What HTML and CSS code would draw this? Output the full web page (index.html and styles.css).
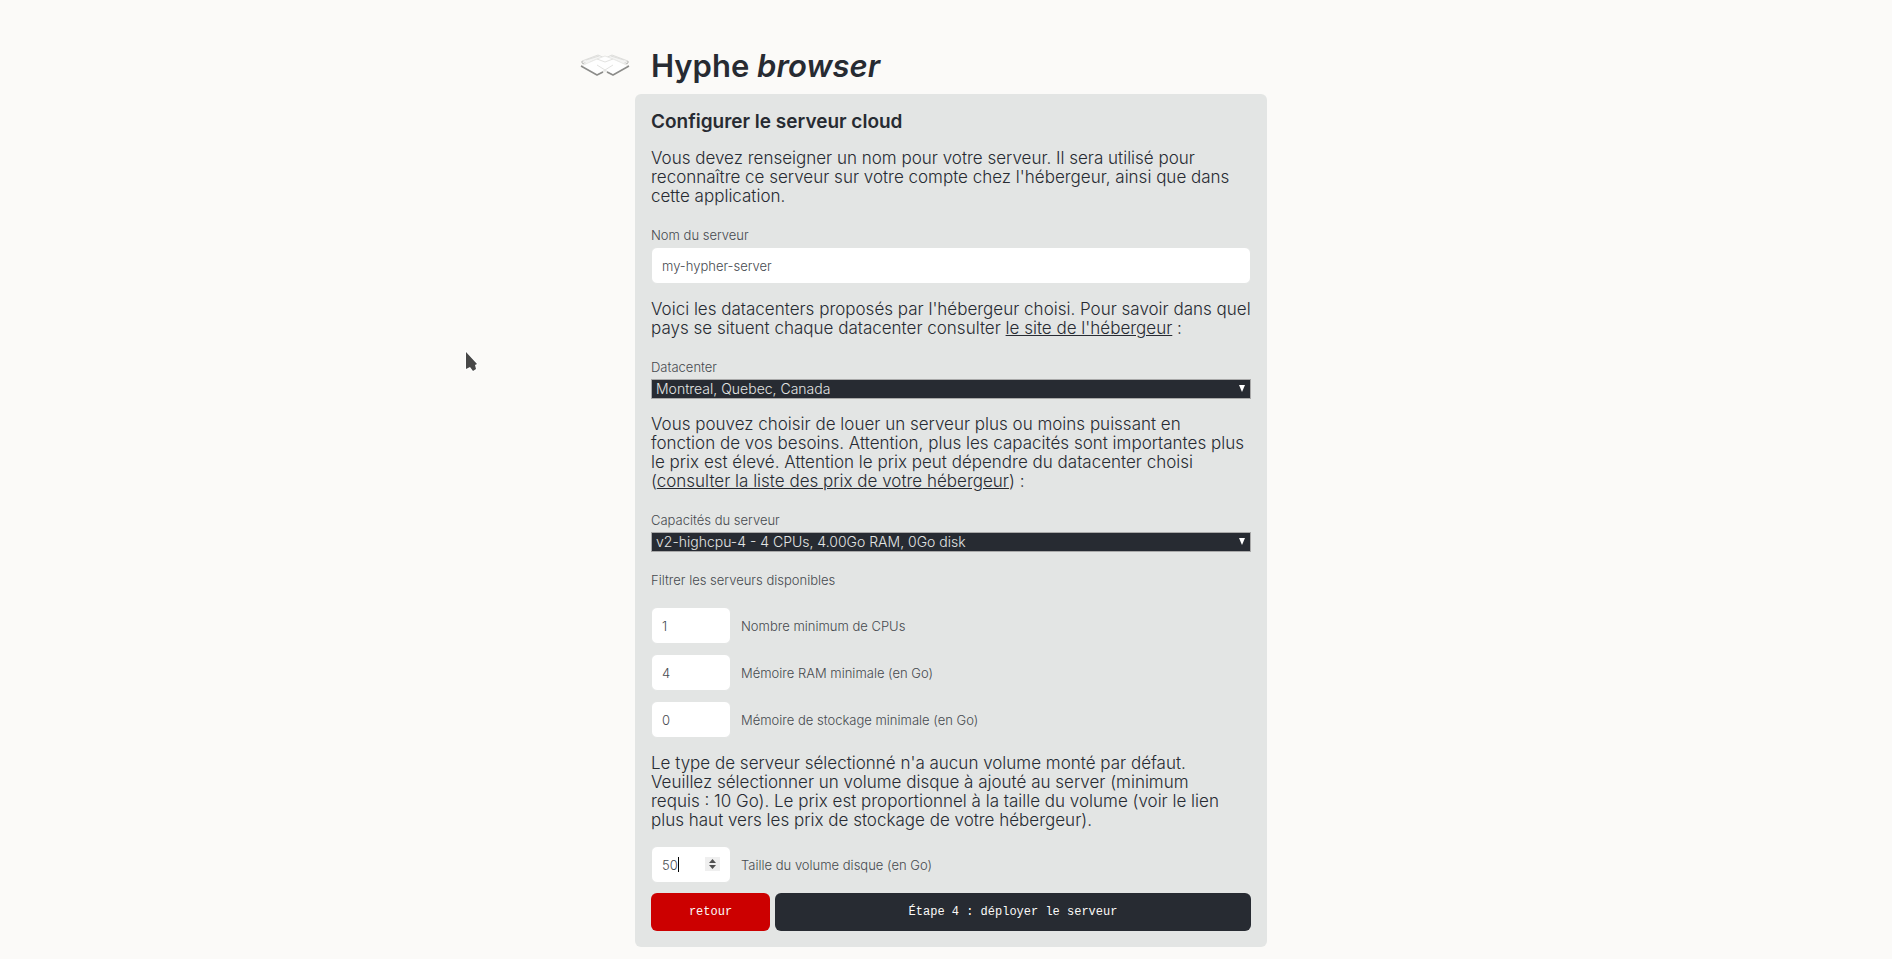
FILE: index.html
```html
<!DOCTYPE html>
<html lang="fr">
<head>
<meta charset="utf-8">
<meta name="viewport" content="width=device-width, initial-scale=1">
<title>Hyphe browser</title>
<link rel="stylesheet" href="styles.css">
</head>
<body>
<div class="page">
  <header class="header">
    <svg class="logo" viewBox="0 0 50 24" aria-hidden="true">
      <g stroke-linejoin="round">
        <path d="M2 7 18 1 25 4 32 1 48 7 34 15 25 10 16 15Z" fill="#f4f4f3" stroke="#dededc"/>
        <path d="M2 7v2L16 16M48 7v2L34 16" fill="none" stroke="#b4b4b2"/>
        <path d="M6 6 19 2M10 8 24 3M44 6 31 2M40 8 26 3" fill="none" stroke="#dededc"/>
        <path d="M1 12 17 5 25 2 33 5 49 12 33 21 25 17 17 21Z" fill="#fefefe" stroke="#e9e9e7"/>
        <path d="M17 5 25 8 33 5" fill="none" stroke="#e2e2e0"/>
        <path d="M17 21 33 11M33 21 17 11" fill="none" stroke="#e2e2e0"/>
        <path d="M1 12 17 21 23 18M49 12 33 21 27 18" fill="none" stroke="#8c8c8a" stroke-width="1.500"/>
      </g>
    </svg>
    <h1 class="title">Hyphe <em>browser</em></h1>
  </header>
  <form class="card">
    <h2 class="heading">Configurer le serveur cloud</h2>
    <p class="text">Vous devez renseigner un nom pour votre serveur. Il sera utilisé pour<br>reconnaître ce serveur sur votre compte chez l'hébergeur, ainsi que dans<br>cette application.</p>
    <div class="field">
      <label class="label" for="name">Nom du serveur</label>
      <input class="input" id="name" type="text" value="my-hypher-server">
    </div>
    <p class="text">Voici les datacenters proposés par l'hébergeur choisi. Pour savoir dans quel<br>pays se situent chaque datacenter consulter <a class="link" href="#">le site de l'hébergeur</a> :</p>
    <div class="field">
      <label class="label" for="datacenter">Datacenter</label>
      <span class="dropdown"><select class="select" id="datacenter"><option>Montreal, Quebec, Canada</option></select></span>
    </div>
    <p class="text">Vous pouvez choisir de louer un serveur plus ou moins puissant en<br>fonction de vos besoins. Attention, plus les capacités sont importantes plus<br>le prix est élevé. Attention le prix peut dépendre du datacenter choisi<br>(<a class="link" href="#">consulter la liste des prix de votre hébergeur</a>) :</p>
    <div class="field">
      <label class="label" for="capacity">Capacités du serveur</label>
      <span class="dropdown"><select class="select" id="capacity"><option>v2-highcpu-4 - 4 CPUs, 4.00Go RAM, 0Go disk</option></select></span>
    </div>
    <p class="label filter-title">Filtrer les serveurs disponibles</p>
    <div class="rows">
      <div class="row">
        <input class="input number" id="cpus" type="number" value="1">
        <label class="label" for="cpus">Nombre minimum de CPUs</label>
      </div>
      <div class="row">
        <input class="input number" id="ram" type="number" value="4">
        <label class="label" for="ram">Mémoire RAM minimale (en Go)</label>
      </div>
      <div class="row">
        <input class="input number" id="disk" type="number" value="0">
        <label class="label" for="disk">Mémoire de stockage minimale (en Go)</label>
      </div>
    </div>
    <p class="text">Le type de serveur sélectionné n'a aucun volume monté par défaut.<br>Veuillez sélectionner un volume disque à ajouté au server (minimum<br>requis : 10 Go). Le prix est proportionnel à la taille du volume (voir le lien<br>plus haut vers les prix de stockage de votre hébergeur).</p>
    <div class="row volume">
      <span class="stepper">
        <input class="input number" id="volume" type="number" value="50">
        <span class="caret"></span>
        <svg class="spinner" viewBox="0 0 15 14" aria-hidden="true"><path fill="#efefef" d="M0 0h15v14H0z"/><path fill="#505050" d="M4 6 7.500 2 11 6ZM4 8h7L7.500 12Z"/></svg>
      </span>
      <label class="label" for="volume">Taille du volume disque (en Go)</label>
    </div>
    <div class="actions">
      <button class="button back" type="button">retour</button>
      <button class="button next" type="button">Étape 4 : déployer le serveur</button>
    </div>
  </form>
</div>
<svg class="pointer" viewBox="0 0 16 24" aria-hidden="true"><path d="M2 2v17l4-2 3 4 3-2-1-4 2-1Z" fill="#484848" stroke="#fff" stroke-width="2" paint-order="stroke"/></svg>
</body>
</html>
```
FILE: styles.css
```css
* {
  box-sizing: border-box;
}

body {
  margin: 0;
  background: #fbfaf8;
  color: #272b32;
  font-family: Inter, "Open Sans", sans-serif;
  font-size: 17px;
  line-height: 19px;
}

.page {
  max-width: 642px;
  margin: 0 auto;
  padding: 46px 0 12px 10px;
}

.header {
  display: flex;
  align-items: center;
  gap: 21px;
  margin: 0 0 8px -55px;
}

.logo {
  width: 50px;
  height: 24px;
}

.title {
  margin: 0;
  font-size: 31px;
  line-height: 40px;
  font-weight: 600;
}

.card {
  padding: 16px;
  border-radius: 6px;
  background: #e3e5e4;
}

.heading {
  margin: 0 0 16px;
  font-size: 19px;
  line-height: 23px;
  font-weight: 600;
}

.text {
  margin: 0;
  font-weight: 300;
}

.link {
  color: inherit;
}

.field {
  display: flex;
  flex-direction: column;
  gap: 5px;
  margin: 22px 0 16px;
}

.label {
  margin: 0;
  color: #464a4f;
  font-size: 13px;
  font-weight: 300;
  line-height: 14px;
}

.input {
  width: 100%;
  height: 37px;
  padding: 0 10px;
  border: 1px solid #e3e5e4;
  border-radius: 6px;
  background: #fff;
  color: #464a4f;
  font: inherit;
  font-size: 13px;
  font-weight: 300;
  outline: 0;
}

.number {
  width: 80px;
  appearance: textfield;
}

.dropdown {
  display: block;
  position: relative;
}

.dropdown::after {
  content: "";
  position: absolute;
  top: 6px;
  right: 6px;
  border: 3px solid transparent;
  border-top: 7px solid #fff;
  border-bottom: 0;
  pointer-events: none;
}

.select {
  display: block;
  width: 100%;
  height: 20px;
  padding: 0 4px;
  border: 1px solid #a9a9a9;
  border-radius: 0;
  background: #272b32;
  color: #e3e5e4;
  font: inherit;
  font-size: 14px;
  font-weight: 300;
  line-height: 18px;
  appearance: none;
}

.filter-title {
  margin: 21px 0 20px;
}

.rows {
  display: grid;
  gap: 10px;
  margin-bottom: 16px;
}

.row {
  display: flex;
  align-items: center;
  gap: 10px;
}

.volume {
  margin: 16px 0 10px;
}

.stepper {
  position: relative;
}

.stepper .input {
  display: block;
}

.caret {
  position: absolute;
  top: 11px;
  left: 27px;
  width: 1px;
  height: 15px;
  background: #000;
}

.spinner {
  position: absolute;
  top: 11px;
  right: 11px;
  width: 15px;
  height: 14px;
}

.actions {
  display: grid;
  grid-template-columns: 1fr 4fr;
  gap: 5px;
}

.button {
  height: 38px;
  border: 0;
  border-radius: 6px;
  color: #fbfaf8;
  font-family: "Liberation Mono", monospace;
  font-size: 12px;
}

.back {
  background: #c00;
}

.next {
  background: #272b32;
}

.pointer {
  position: absolute;
  top: 350px;
  left: 464px;
  width: 16px;
  height: 24px;
}
```
